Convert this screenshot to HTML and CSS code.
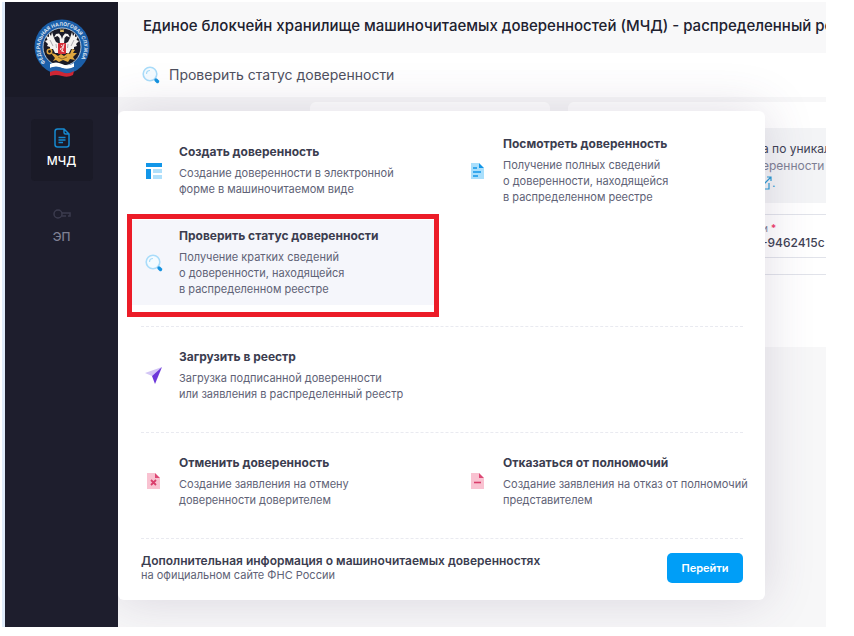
FILE: index.html
```html
<!DOCTYPE html>
<html lang="ru">
<head>
  <meta charset="utf-8">
  <title>Единое блокчейн хранилище МЧД</title>
  <link rel="stylesheet" href="styles.css">
</head>
<body>
  <div class="app">
    <aside class="sidebar">
      <a class="brand" href="#">
        <svg width="56" height="60" viewBox="0 0 56 60" role="img" aria-label="Федеральная налоговая служба">
          <circle cx="28" cy="28" r="27.5" fill="#1b5fa9"/>
          <circle cx="28" cy="28" r="19" fill="#191a26" stroke="#d7e4f2" stroke-width="0.8"/>
          <path id="arc" d="M11.5 43.5 A22 22 0 1 1 44.5 43.5" fill="none"/>
          <text class="brand-text"><textPath href="#arc">ФЕДЕРАЛЬНАЯ НАЛОГОВАЯ СЛУЖБА</textPath></text>
          <path d="M26 25 L25.5 19 L23.5 17 L20 18.5 L22 15 L25 14.5 L27 17 L28 20 L29 17 L31 14.5 L34 15 L36 18.5 L32.5 17 L30.5 19 L30 25 L34 23 L36 19 L38 13 L39 17 L41 14 L41 18 L44 17 L42.5 21 L45 22 L42 25 L43 27 L40 28 L40 30 L37 30 L35 34 H21 L19 30 L16 30 L16 28 L13 27 L14 25 L11 22 L13.5 21 L12 17 L15 18 L15 14 L17 17 L18 13 L20 19 L22 23 Z" fill="#f5f3f0"/>
          <path d="M26 13 L26.5 10 L28 11 L29.5 10 L30 13 Z" fill="#d8b55c"/>
          <path d="M16 21 L19 27 M40 21 L37 27 M22 25 L22.5 29 M34 25 L33.5 29" stroke="#8e8d94" stroke-width="0.7"/>
          <rect x="24" y="24" width="8" height="11" rx="1" fill="#d52f38"/>
          <path d="M27 26 L29.5 28 L26 30 L30 33 M30 25 L28 33" fill="none" stroke="#f6dedd" stroke-width="1"/>
          <circle cx="15.5" cy="32.5" r="2.2" fill="none" stroke="#dda43d" stroke-width="1.5"/>
          <path d="M17 34 L21 35 L24 37 L27 35 L30 37 L34 34 L36 35 L38 30 L41 31 L39 34 L43 34 L39 38 L41 41 L36 40 L34 43 L29 41 L25 43 L22 41 L19 42 L21 39 Z" fill="#e0a83e"/>
          <path d="M24 38 L28 40 L33 38" stroke="#8f6a28" fill="none"/>
          <path d="M16 45 Q22 42 28 45 T40 44 L40 48 Q34 51 28 49 T16 49 Z" fill="#fff"/>
          <path d="M16 49 Q22 46 28 49 T40 48 L40 52 Q34 55 28 53 T16 53 Z" fill="#2462aa"/>
          <path d="M16 53 Q22 50 28 53 T40 52 L39 56 Q34 59 28 57 T16 57 Z" fill="#cf2634"/>
        </svg>
      </a>
      <nav class="side-nav">
        <a class="side-link active" href="#">
          <svg width="16" height="20" viewBox="0 0 16 20" fill="none" stroke="#1689cf" stroke-width="1.5">
            <path d="M10 1 H3.5 Q1 1 1 3.5 V16.5 Q1 19 3.5 19 H12.5 Q15 19 15 16.5 V6 Z M10 1 V4.5 Q10 6 11.5 6 H15"/>
            <path d="M4.5 9.5 H11.5 M4.5 12 H11.5 M4.5 14.5 H9"/>
          </svg>
          <span>МЧД</span>
        </a>
        <a class="side-link" href="#">
          <svg width="18" height="20" viewBox="0 0 18 20" fill="none" stroke="#3b3b4e" stroke-width="1.5">
            <circle cx="5" cy="10" r="4"/>
            <path d="M9 9 H17 V12 H15 M13 12 H9"/>
          </svg>
          <span>ЭП</span>
        </a>
      </nav>
    </aside>

    <main class="main">
      <header class="header">
        <h1>Единое блокчейн хранилище машиночитаемых доверенностей (МЧД) - распределенный реестр</h1>
      </header>
      <div class="toolbar">
        <svg class="icon" viewBox="0 0 18 18">
          <circle cx="8" cy="8" r="6.8" fill="#f4fbff" stroke="#a9dcfa" stroke-width="1.6"/>
          <path d="M4.5 8 Q4.5 4.5 8 4.5" fill="none" stroke="#a9dcfa" stroke-width="1.2"/>
          <path d="M14 14 L15.5 15.5" stroke="#1492e0" stroke-width="3.4" stroke-linecap="round"/>
        </svg>
        <h2>Проверить статус доверенности</h2>
      </div>

      <div class="content">
        <section class="card card-side"></section>
        <section class="card card-form">
          <div class="notice">
            <p class="notice-title">а по уникальному номеру</p>
            <p>еренности</p>
            <a href="#" aria-label="Открыть">
              <svg width="10" height="14" viewBox="0 0 10 14" fill="none" stroke="#2a9bd6" stroke-width="1.2">
                <path d="M1 13 H7 V7 M0 2 H3 M2 8 L9 1 M5 1 H9 V5"/>
              </svg>.
            </a>
          </div>
          <div class="field">
            <label for="number">и <b>*</b></label>
            <input id="number" type="text" value="-9462415c">
          </div>
          <hr>
        </section>
      </div>

      <div class="menu">
        <div class="menu-section">
          <a class="item" href="#">
            <svg class="icon" viewBox="0 0 18 18">
              <path d="M1 1 H17 V5 H1 Z M1 7 H6 V17 H1 Z" fill="#1296e8"/>
              <path d="M8 7 H17 V11 H8 Z M8 13 H17 V17 H8 Z" fill="#b0e0fb"/>
            </svg>
            <span><strong>Создать доверенность</strong>Создание доверенности в электронной<br>форме в машиночитаемом виде</span>
          </a>
          <a class="item" href="#">
            <svg class="icon" viewBox="0 0 18 18">
              <path d="M2 1 H10 V6 H15 V17 H2 Z" fill="#a9dffc"/>
              <path d="M10 1 L15 6 H10 Z" fill="#1296e8"/>
              <path d="M4 6 H8 M4 10 H12 M4 14 H9" stroke="#1296e8" stroke-width="1.6"/>
            </svg>
            <span><strong>Посмотреть доверенность</strong>Получение полных сведений<br>о доверенности, находящейся<br>в распределенном реестре</span>
          </a>
          <a class="item current" href="#">
            <svg class="icon" viewBox="0 0 18 18">
              <circle cx="8" cy="8" r="6.8" fill="#f4fbff" stroke="#a9dcfa" stroke-width="1.6"/>
              <path d="M4.5 8 Q4.5 4.5 8 4.5" fill="none" stroke="#a9dcfa" stroke-width="1.2"/>
              <path d="M14 14 L15.5 15.5" stroke="#1492e0" stroke-width="3.4" stroke-linecap="round"/>
            </svg>
            <span><strong>Проверить статус доверенности</strong>Получение кратких сведений<br>о доверенности, находящейся<br>в распределенном реестре</span>
          </a>
        </div>

        <div class="menu-section">
          <a class="item" href="#">
            <svg class="icon" viewBox="0 0 18 18">
              <path d="M17 1 L0 7 L7 10 Z" fill="#d3c6f5"/>
              <path d="M17 1 L7 10 L10 18 Z" fill="#6c37d9"/>
            </svg>
            <span><strong>Загрузить в реестр</strong>Загрузка подписанной доверенности<br>или заявления в распределенный реестр</span>
          </a>
        </div>

        <div class="menu-section">
          <a class="item" href="#">
            <svg class="icon" viewBox="0 0 18 18">
              <path d="M2 1 H10 V6 H15 V17 H2 Z" fill="#f9c2d1"/>
              <path d="M10 1 L15 6 H10 Z" fill="#dd4975"/>
              <path d="M6 8 L11 13 M11 8 L6 13" stroke="#d93e6c" stroke-width="1.8"/>
            </svg>
            <span><strong>Отменить доверенность</strong>Создание заявления на отмену<br>доверенности доверителем</span>
          </a>
          <a class="item" href="#">
            <svg class="icon" viewBox="0 0 18 18">
              <path d="M2 1 H10 V6 H15 V17 H2 Z" fill="#f9c2d1"/>
              <path d="M10 1 L15 6 H10 Z" fill="#dd4975"/>
              <path d="M5 10.5 H12" stroke="#d93e6c" stroke-width="1.6"/>
            </svg>
            <span><strong>Отказаться от полномочий</strong>Создание заявления на отказ от полномочий<br>представителем</span>
          </a>
        </div>

        <div class="menu-footer">
          <p><strong>Дополнительная информация о машиночитаемых доверенностях</strong>на официальном сайте ФНС России</p>
          <button type="button">Перейти</button>
        </div>
      </div>
    </main>
  </div>
</body>
</html>
```
FILE: styles.css
```css
* {
  box-sizing: border-box;
}

body {
  margin: 0;
  padding: 2px 28px 9px 2px;
  min-height: 100vh;
  display: flex;
  background: #fff;
  color: #3f4254;
  font-family: Inter, "Liberation Sans", sans-serif;
  font-size: 11px;
  line-height: 16px;
}

h1, h2, p {
  margin: 0;
}

a {
  color: inherit;
  text-decoration: none;
}

.app {
  flex: 1;
  min-width: 0;
  display: flex;
  border-left: 3px solid #dfebfa;
}

/* sidebar */
.sidebar {
  width: 113px;
  flex-shrink: 0;
  background: #1e1e2d;
}

.brand {
  display: flex;
  justify-content: center;
  height: 95px;
  padding-top: 17px;
  background: #1a1a27;
}

.brand-text {
  fill: #e4edf7;
  font-size: 5px;
  font-weight: 600;
}

.side-nav {
  display: flex;
  flex-direction: column;
  align-items: center;
  gap: 14px;
  padding-top: 22px;
}

.side-link {
  display: flex;
  flex-direction: column;
  align-items: center;
  justify-content: center;
  gap: 5px;
  width: 62px;
  height: 62px;
  padding-bottom: 4px;
  border-radius: 4px;
  color: #7f8093;
  font-size: 12px;
  font-weight: 500;
}

.side-link.active {
  background: #1a1a27;
  color: #fff;
}

/* page */
.main {
  flex: 1;
  min-width: 0;
  position: relative;
  overflow: hidden;
  background: #f7f7f8;
}

.header {
  height: 51px;
  padding: 14px 25px;
  background: #f8f8f9;
}

.header h1 {
  font-size: 15px;
  line-height: 20px;
  font-weight: 500;
  color: #20212f;
  white-space: nowrap;
}

.toolbar {
  display: flex;
  align-items: center;
  gap: 9px;
  height: 44px;
  padding: 0 24px;
  background: #fff;
}

.toolbar h2 {
  font-size: 14px;
  font-weight: 400;
  color: #4e505e;
}

.icon {
  width: 18px;
  height: 18px;
  flex-shrink: 0;
}

.content {
  display: flex;
  gap: 18px;
  padding: 5px 0 0 192px;
}

.card {
  height: 245px;
  border-radius: 6px 0 0 6px;
  background: #fff;
}

.card-side {
  width: 240px;
  flex-shrink: 0;
  border-radius: 6px;
}

.card-form {
  flex: 1;
  min-width: 0;
  padding-top: 26px;
  overflow: hidden;
  white-space: nowrap;
}

.notice {
  height: 75px;
  padding: 12px 0 0 194px;
  background: #f3f4f6;
  font-size: 12px;
  line-height: 17px;
  color: #7e8094;
}

.notice-title {
  color: #3f4254;
}

.notice a {
  color: #2a9bd6;
}

.notice svg {
  vertical-align: text-bottom;
}

.field {
  margin-top: 11px;
  height: 44px;
  padding: 6px 0 0 194px;
  border: 1px solid #e1e3ea;
  border-width: 1px 0;
}

.field label {
  display: block;
  font-size: 10px;
  line-height: 14px;
  color: #7e8094;
}

.field b {
  color: #f1416c;
}

.field input {
  display: block;
  width: 100%;
  padding: 0;
  border: 0;
  background: none;
  font: 500 12px/16px Inter, "Liberation Sans", sans-serif;
  color: #3f4254;
}

.card-form hr {
  margin: 16px 0 0;
  border: 0;
  border-top: 1px solid #e1e3ea;
}

/* drop-down menu */
.menu {
  position: absolute;
  top: 109px;
  left: 0;
  width: 647px;
  padding: 5px 22px 17px 23px;
  border-radius: 6px;
  background: #fff;
  box-shadow: 0 0 50px rgba(82, 63, 105, 0.18);
}

.menu-section {
  display: grid;
  grid-template-columns: 302px 1fr;
  column-gap: 22px;
  padding: 12px 0 14px;
  border-bottom: 1px dashed #e9eaf0;
}

.item {
  display: flex;
  align-items: center;
  gap: 16px;
  min-height: 72px;
  margin: 0 9px 7px -9px;
  padding: 8px 0 8px 13px;
  color: #606276;
  white-space: nowrap;
}

.item strong,
.menu-footer strong {
  display: block;
  color: #3b3d4f;
  font-size: 12px;
}

.item strong {
  margin-bottom: 5px;
  font-weight: 700;
}

.item.current {
  position: relative;
  background: #f5f6fb;
}

.item.current::after {
  content: "";
  position: absolute;
  inset: -6px -5px -12px;
  border: 5px solid #ec1c28;
}

.menu-footer {
  display: flex;
  align-items: center;
  justify-content: space-between;
  padding-top: 14px;
  color: #606276;
}

.menu-footer strong {
  font-weight: 600;
}

.menu-footer p {
  line-height: 15px;
}

.menu-footer button {
  width: 76px;
  height: 30px;
  padding: 0;
  border: 0;
  border-radius: 5px;
  background: #009ef7;
  color: #fff;
  font: 600 11px/16px Inter, "Liberation Sans", sans-serif;
}
```
